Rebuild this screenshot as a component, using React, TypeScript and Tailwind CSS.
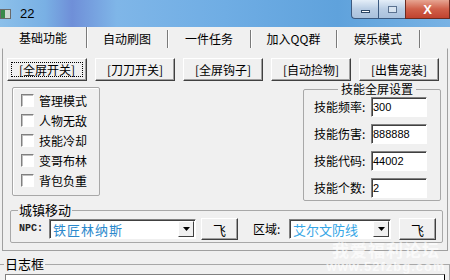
import React from "react";

const tabs = [
  { label: "基础功能", w: "w-[87px]" },
  { label: "自动刷图", w: "w-[81px]" },
  { label: "一件任务", w: "w-[83px]" },
  { label: "加入QQ群", w: "w-[86px]" },
  { label: "娱乐模式", w: "w-[83px]" },
];

const buttons = ["[全屏开关]", "[刀刀开关]", "[全屏钩子]", "[自动捡物]", "[出售宠装]"];

const checks = ["管理模式", "人物无敌", "技能冷却", "变哥布林", "背包负重"];

const skills = [
  { label: "技能频率:", value: "300" },
  { label: "技能伤害:", value: "888888" },
  { label: "技能代码:", value: "44002" },
  { label: "技能个数:", value: "2" },
];

const ClassicButton = ({ label, focus }: { label: string; focus?: boolean }) => (
  <div className="relative flex h-[23px] w-[80px] items-center justify-center border border-t-white border-l-white border-r-[#404040] border-b-[#404040] bg-[#f0f0f0] text-[12px] leading-none shadow-[inset_-1px_-1px_0_#a0a0a0]">
    {label}
    {focus && <div className="absolute inset-[3px] border border-dotted border-black" />}
  </div>
);

const Combo = ({ text, w, color }: { text: string; w: string; color: string }) => (
  <div className={`flex h-[20px] ${w} items-center border border-t-[#808080] border-l-[#808080] border-r-white border-b-white bg-white shadow-[inset_1px_1px_0_#404040]`}>
    <span className={`flex-1 pl-[3px] text-[13px] leading-none ${color}`}>{text}</span>
    <div className="mr-[1px] flex h-[16px] w-[16px] items-center justify-center border border-t-white border-l-white border-r-[#404040] border-b-[#404040] bg-[#f0f0f0]">
      <svg width="7" height="4" viewBox="0 0 7 4">
        <path d="M0 0h7L3.5 4z" fill="#000" />
      </svg>
    </div>
  </div>
);

const FlyButton = () => (
  <div className="flex h-[22px] w-[37px] items-center justify-center border border-t-white border-l-white border-r-[#404040] border-b-[#404040] bg-[#f0f0f0] text-[13px] leading-none shadow-[inset_-1px_-1px_0_#a0a0a0]">
    飞
  </div>
);

export default function App() {
  return (
    <div className="relative h-[280px] w-[450px] overflow-hidden bg-[#f0f0f0] font-['Noto_Sans_CJK_SC',sans-serif] text-black">
      {/* title bar */}
      <div className="relative flex h-[27px] items-center bg-[linear-gradient(90deg,#8cc0ea_0%,#79b0e4_10%,#6f8fd8_16%,#7fb6e8_26%,#6fade4_50%,#5fa2dc_75%,#78b2e4_100%)]">
        <div className="h-[10px] w-[11px] border border-[#6a6a6a] bg-[linear-gradient(90deg,#3b8a4a_0%,#3b8a4a_40%,#cfd8d0_40%)]" />
        <span className="ml-[9px] font-['Liberation_Sans',sans-serif] text-[13px]">22</span>
        <div className="absolute right-0 top-0 flex h-[19px]">
          <div className="flex w-[27px] items-center justify-center rounded-bl-[4px] border border-r-0 border-t-0 border-[#3c5a80] bg-[linear-gradient(180deg,#e4eef8,#b9cde4_50%,#a9c1dc)]">
            <div className="mt-[4px] h-[3px] w-[9px] border border-[#2d4766] bg-white" />
          </div>
          <div className="flex w-[27px] items-center justify-center border border-r-0 border-t-0 border-[#3c5a80] bg-[linear-gradient(180deg,#e4eef8,#b9cde4_50%,#a9c1dc)]">
            <div className="h-[7px] w-[9px] border border-[#5b7290] bg-[#d8e4f0]" />
          </div>
          <div className="flex w-[45px] items-center justify-center border border-t-0 border-[#6b2a20] bg-[linear-gradient(180deg,#e7a592,#d0604a_50%,#c04330)]">
            <span className="font-['Liberation_Sans',sans-serif] text-[13px] font-bold leading-none text-white">X</span>
          </div>
        </div>
      </div>

      {/* tabs */}
      <div className="flex h-[21px] items-end">
        {tabs.map((t, i) => (
          <div
            key={t.label}
            className={`flex ${i === 0 ? "h-[21px]" : "h-[18px]"} ${t.w} items-center justify-center border-r border-[#7a7a7a] text-[12px] leading-none shadow-[1px_0_0_#fff]`}
          >
            {t.label}
          </div>
        ))}
      </div>

      {/* tab pane */}
      <div className="ml-[2px] flex h-[203px] w-[446px] flex-col border border-[#a0a0a0] border-t-[#f0f0f0] px-[4px] pt-[9px]">
        <div className="flex gap-[8px]">
          {buttons.map((b, i) => (
            <ClassicButton key={b} label={b} focus={i === 0} />
          ))}
        </div>

        <div className="mt-[1px] flex items-start">
          <div className="ml-[5px] mt-[5px] flex h-[109px] w-[88px] flex-col gap-[7px] rounded-[2px] border border-[#a8a8a8] pl-[8px] pt-[6px] shadow-[inset_1px_1px_0_#fff]">
            {checks.map((c) => (
              <div key={c} className="flex h-[13px] items-center">
                <div className="h-[13px] w-[13px] border border-t-[#808080] border-l-[#808080] border-r-white border-b-white bg-white shadow-[inset_1px_1px_0_#c0c0c0]" />
                <span className="ml-[5px] text-[12px] leading-none">{c}</span>
              </div>
            ))}
          </div>

          <fieldset className="ml-auto mr-[2px] h-[119px] w-[138px] rounded-[2px] border border-[#a8a8a8] pl-[10px]">
            <legend className="mx-auto px-[3px] text-[12px] leading-[14px]">技能全屏设置</legend>
            <div className="mt-[1px] flex flex-col gap-[7px]">
              {skills.map((s) => (
                <div key={s.label} className="flex h-[20px] items-center">
                  <span className="w-[57px] text-[12px] leading-none">{s.label}</span>
                  <div className="flex h-[20px] w-[56px] items-center border border-t-[#808080] border-l-[#808080] border-r-white border-b-white bg-white pl-[1px] font-['Liberation_Sans',sans-serif] text-[11px] shadow-[inset_1px_1px_0_#404040]">
                    {s.value}
                  </div>
                </div>
              ))}
            </div>
          </fieldset>
        </div>

        <fieldset className="ml-[3px] mt-[2px] h-[40px] w-[433px] rounded-[2px] border border-[#a8a8a8]">
          <legend className="ml-[7px] px-[1px] text-[13px] leading-[14px]">城镇移动</legend>
          <div className="mt-[1px] flex items-center">
            <span className="ml-[8px] w-[30px] font-['Liberation_Mono',monospace] text-[10px] font-bold leading-none text-[#222]">NPC:</span>
            <Combo text="铁匠林纳斯" w="w-[147px]" color="text-[#2a88cc] tracking-[1px]" />
            <div className="ml-[5px]">
              <FlyButton />
            </div>
            <span className="ml-[15px] w-[36px] text-[12px] leading-none">区域:</span>
            <Combo text="艾尔文防线" w="w-[102px]" color="text-[#35a6e6]" />
            <div className="ml-[8px]">
              <FlyButton />
            </div>
          </div>
        </fieldset>
      </div>

      {/* log box */}
      <fieldset className="-ml-[2px] mt-[6px] h-[40px] w-[452px] border border-[#a8a8a8]">
        <legend className="ml-[5px] px-[1px] text-[13px] leading-[14px]">日志框</legend>
        <div className="ml-[6px] mt-[3px] h-[20px] w-[440px] border border-t-[#808080] border-l-[#808080] bg-white" />
      </fieldset>

      {/* watermark */}
      <div className="pointer-events-none absolute left-[330px] top-[241px] flex w-[112px] flex-col items-center text-white opacity-70">
        <span className="text-[17px] font-bold leading-[18px] tracking-[1px]">我爱福利论坛</span>
        <span className="font-['Liberation_Sans',sans-serif] text-[13px] font-bold leading-[16px] tracking-[1px]">www.52fzbg.com</span>
      </div>
    </div>
  );
}
